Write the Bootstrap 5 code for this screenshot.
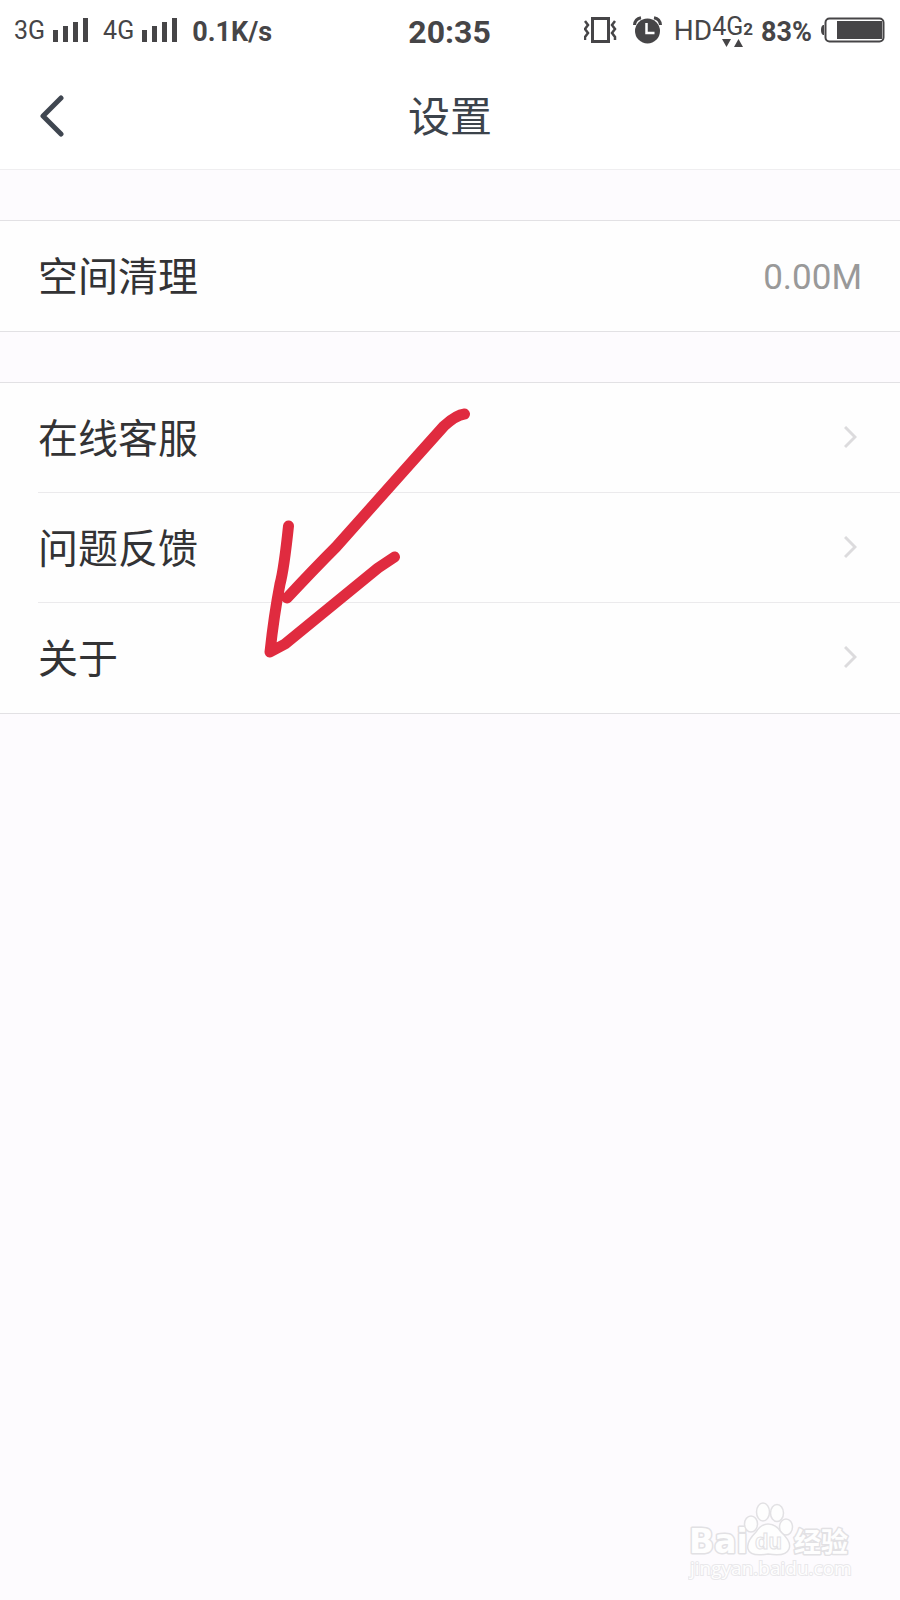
<!DOCTYPE html>
<html lang="zh-CN">
<head>
<meta charset="utf-8">
<meta name="viewport" content="width=device-width, initial-scale=1">
<title>设置</title>
<link href="https://cdn.jsdelivr.net/npm/bootstrap@5.3.0/dist/css/bootstrap.min.css" rel="stylesheet">
<style>
  body { background: #fdfbfe; color: #333335; font-family: Roboto, "Noto Sans CJK SC", sans-serif; }
  svg { display: block; flex: none; }
  .status-bar { height: 60px; padding: 0 15px 0 14px; color: #464547; line-height: 32px; }
  .status-side { flex: 1 1 0; height: 32px; }
  .net { font-size: 25px; padding-top: 2px; }
  .gap-sm-x { margin-left: 14px; }
  .strong-text { font-size: 27px; font-weight: 700; padding-top: 4px; }
  .clock { font-size: 32px; font-weight: 700; padding-top: 4px; }
  .hd { font-size: 28px; padding-top: 2px; }
  .data-net { font-size: 25px; line-height: 24px; padding-bottom: 4px; }
  .data-net b { font-size: 17px; }
  .data-net svg { top: 24px; left: 10px; }
  .title-bar { height: 110px; border-bottom: 1px solid #efeef0; color: #3c434b; }
  .title-bar h1 { font-size: 42px; font-weight: 400; line-height: 60px; padding-top: 6px; }
  .title-side { flex: 1 1 0; }
  .back-button { color: #3f4650; margin-left: 39px; }
  .settings { margin-top: 50px; border: solid #e2e1e4; border-width: 1px 0; background: #fefefe; }
  .settings .list-group-item { height: 110px; padding: 0 38px 0 0; margin-left: 38px; border: 0; background: transparent; color: #333335; font-size: 40px; line-height: 60px; }
  .settings a.list-group-item:not(:last-of-type) { border-bottom: 1px solid #ebeaec; }
  .settings span { padding-top: 4px; }
  .settings .size-value { font-size: 35px; color: #999; }
  .chevron { color: #dcdbdd; margin-right: 5px; }
  .arrow { left: 260px; top: 20px; pointer-events: none; }
  .watermark { padding: 0 46px 16px 0; }
</style>
</head>
<body>
<div class="d-flex flex-column min-vh-100">
  <header class="bg-white">
    <div class="status-bar d-flex align-items-center">
      <div class="status-side d-flex align-items-center">
        <span class="net">3G</span>
        <svg class="ms-2" width="36" height="26" fill="currentColor" aria-hidden="true"><path d="M0 13h5v12H0zM10 9h5v16h-5zM20 5h5v20h-5zM30 1h5v24h-5z"/></svg>
        <span class="net gap-sm-x">4G</span>
        <svg class="ms-2" width="36" height="26" fill="currentColor" aria-hidden="true"><path d="M0 13h5v12H0zM10 9h5v16h-5zM20 5h5v20h-5zM30 1h5v24h-5z"/></svg>
        <span class="strong-text gap-sm-x">0.1K/s</span>
      </div>
      <time class="clock">20:35</time>
      <div class="status-side d-flex align-items-center justify-content-end">
        <svg width="33" height="28" fill="none" stroke="currentColor" aria-hidden="true"><path stroke-width="3" d="M8.500 2.500h16v23h-16z"/><path stroke-width="2.500" d="M1 5l3 4-3 4 3 4-3 4 0 3M31 5l-3 4 3 4-3 4 3 4 0 3"/></svg>
        <svg class="ms-3" width="29" height="28" fill="currentColor" aria-hidden="true"><circle cx="14.500" cy="15" r="12.500"/><path fill="none" stroke="#fff" stroke-width="2.500" d="M13.500 7v10h8"/><path fill="none" stroke="currentColor" stroke-width="3" d="M1.500 9Q2 3 8 1.800M27.500 9Q27 3 21 1.800"/></svg>
        <span class="hd ms-2 ps-1">HD</span>
        <span class="data-net position-relative">4G<b>2</b><svg class="position-absolute" width="22" height="9" fill="currentColor" aria-hidden="true"><path d="M0 0h9L4.500 8zM12 8h9L16.500 0z"/></svg></span>
        <span class="strong-text ms-2">83%</span>
        <svg class="ms-2" width="65" height="26" aria-hidden="true"><path fill="#464547" d="M4 8v10H3Q1 17 1 13t2-5z"/><rect x="5.500" y="1.500" width="58" height="23" rx="4" fill="none" stroke="#464547" stroke-width="2"/><path fill="#464547" d="M17 4h45v18H17z"/></svg>
      </div>
    </div>
    <div class="title-bar d-flex align-items-center">
      <div class="title-side"><button type="button" class="back-button btn p-0 border-0" aria-label="返回"><svg width="26" height="44" fill="none" stroke="currentColor" stroke-width="5" stroke-linecap="round" stroke-linejoin="round"><path d="M22 5L4 23l18 18"/></svg></button></div>
      <h1 class="m-0">设置</h1>
      <div class="title-side"></div>
    </div>
  </header>
  <main>
    <div class="settings list-group rounded-0">
      <button type="button" class="list-group-item d-flex align-items-center justify-content-between text-start"><span>空间清理</span><span class="size-value">0.00M</span></button>
    </div>
    <div class="settings list-group rounded-0 position-relative">
      <a href="#service" class="list-group-item d-flex align-items-center justify-content-between"><span>在线客服</span><svg class="chevron" width="13" height="24" fill="none" stroke="currentColor" stroke-width="3" aria-hidden="true"><path d="M1 1l10 10L1 21"/></svg></a>
      <a href="#feedback" class="list-group-item d-flex align-items-center justify-content-between"><span>问题反馈</span><svg class="chevron" width="13" height="24" fill="none" stroke="currentColor" stroke-width="3" aria-hidden="true"><path d="M1 1l10 10L1 21"/></svg></a>
      <a href="#about" class="list-group-item d-flex align-items-center justify-content-between"><span>关于</span><svg class="chevron" width="13" height="24" fill="none" stroke="currentColor" stroke-width="3" aria-hidden="true"><path d="M1 1l10 10L1 21"/></svg></a>
      <svg class="arrow position-absolute" width="220" height="260" fill="none" stroke="#e02b3f" stroke-width="11" stroke-linecap="round" stroke-linejoin="round" aria-hidden="true"><path d="M204.500 11Q196 12 184 23L158 52L76 144Q54 166 27 195M28.500 123Q24 166 20 181Q14 212 10 249L25 241L118 165L134.500 154"/></svg>
    </div>
  </main>
  <footer class="watermark mt-auto d-flex justify-content-end">
    <svg width="166" height="84" fill="#fefefe" stroke="#e2e1e4" stroke-width="1" role="img" aria-label="Baidu 经验">
      <g stroke-width="3" paint-order="stroke" stroke-linejoin="round">
        <text x="1" y="53" font-family="DejaVu Sans, sans-serif" font-size="33" font-weight="700">Bai</text>
        <text x="106" y="52" font-family="Noto Sans CJK SC, sans-serif" font-size="27" font-weight="700">经验</text>
      </g>
      <g stroke-width="1.500">
        <ellipse cx="63" cy="24" rx="6.500" ry="8"/><ellipse cx="75" cy="12" rx="6.500" ry="9"/><ellipse cx="89" cy="13" rx="6.500" ry="8.500"/><ellipse cx="98" cy="27" rx="6.500" ry="8"/>
        <path d="M80 24Q88 24 93 32Q104 42 101 49Q98 57 80 54Q62 57 60 49Q58 42 68 32Q73 24 80 24z"/>
      </g>
      <text x="67" y="49" font-family="Liberation Sans, sans-serif" font-size="22" font-weight="700">du</text>
      <text x="2" y="75" font-family="Open Sans, sans-serif" font-size="19" stroke-width="2" stroke="#e9e8eb" paint-order="stroke">jingyan.baidu.com</text>
    </svg>
  </footer>
</div>
<script src="https://cdn.jsdelivr.net/npm/bootstrap@5.3.0/dist/js/bootstrap.bundle.min.js"></script>
</body>
</html>
